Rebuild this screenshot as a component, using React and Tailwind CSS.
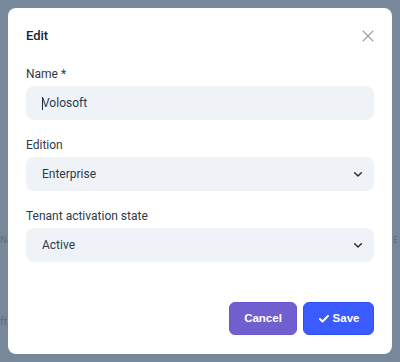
import { X, Check } from 'lucide-react'

// Edit tenant dialog over a dimmed list
function Field({ label, children }) {
  return (
    <div className="flex flex-col gap-[4px]">
      <label className="text-[12px] leading-[16px] text-[#2d3a4b]">{label}</label>
      {children}
    </div>
  )
}

function SelectBox({ value }) {
  return (
    <div className="h-[34px] rounded-lg bg-[#eff3f7] pl-4 pr-[12px] flex items-center justify-between text-[12px] text-[#2b3a4d]">
      <span>{value}</span>
      <svg width="8" height="5" viewBox="0 0 8 5" fill="none" className="mt-px">
        <path d="M0.7 0.7 4 4 7.3 0.7" stroke="#1f2937" strokeWidth="1.4" strokeLinecap="round" strokeLinejoin="round" />
      </svg>
    </div>
  )
}

export default function App() {
  return (
    <div className="relative h-[362px] w-[400px] bg-[#77889a] p-2 font-['Roboto',sans-serif] overflow-hidden">
      {/* faint content behind the overlay */}
      <span className="absolute left-0 top-[234px] text-[9px] text-[#5d6d80]">NA</span>
      <span className="absolute left-0 top-[314px] text-[11px] text-[#5d6d80]">ft</span>
      <span className="absolute left-[393px] top-[234px] text-[9px] text-[#5d6d80]">E</span>

      <div className="relative h-[346px] w-[384px] rounded-lg bg-white px-[18px] pt-[20px] flex flex-col">
        <div className="flex items-center justify-between h-[16px]">
          <h2 className="text-[13px] font-medium text-[#1a2535]">Edit</h2>
          <X size={20} strokeWidth={1.4} className="text-[#9aa5b1] mr-[-4px]" />
        </div>

        <div className="mt-[22px] flex flex-col gap-[17px]">
          <Field label="Name *">
            <div className="h-[34px] rounded-lg bg-[#eff3f7] pl-4 flex items-center text-[12px] text-[#2b3a4d]">
              <span className="w-px h-[13px] bg-[#1e293b] -mr-px" />
              <span>Volosoft</span>
            </div>
          </Field>
          <Field label="Edition">
            <SelectBox value="Enterprise" />
          </Field>
          <Field label="Tenant activation state">
            <SelectBox value="Active" />
          </Field>
        </div>

        <div className="mt-auto mb-[19px] flex justify-end gap-[6px] font-['Liberation_Sans',Arial,sans-serif]">
          <button className="h-[33px] w-[68px] rounded-md bg-[#6f5fcf] border border-[#6a58d2] text-white text-[11.5px] font-bold">
            Cancel
          </button>
          <button className="h-[33px] w-[71px] rounded-md bg-[#3a5bff] border border-[#2f50f0] text-white text-[11.5px] font-bold flex items-center justify-center gap-[3px]">
            <Check size={12} strokeWidth={4} />
            Save
          </button>
        </div>
      </div>
    </div>
  )
}
